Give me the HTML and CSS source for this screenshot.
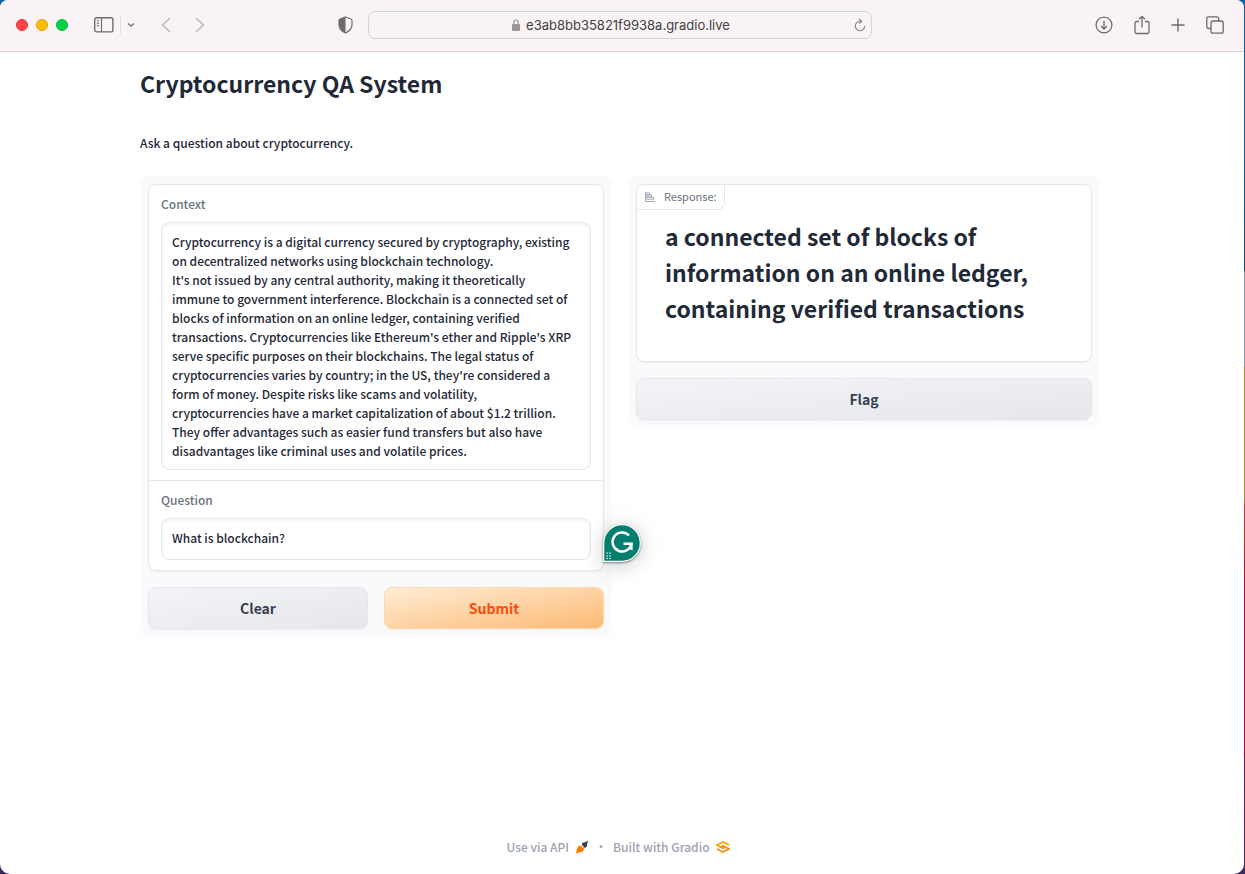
FILE: index.html
```html
<!DOCTYPE html>
<html lang="en">
<head>
<meta charset="utf-8">
<title>Cryptocurrency QA System</title>
<link rel="stylesheet" href="styles.css">
</head>
<body>
<div class="window">
  <header class="toolbar">
    <div class="side left">
      <div class="lights"><span class="light red"></span><span class="light yellow"></span><span class="light green"></span></div>
      <div class="sidebar-tools">
        <button class="tool" aria-label="Sidebar"><svg width="20" height="16" viewBox="0 0 20 16" fill="none" stroke="#6f6a6c" stroke-width="1.4"><rect x=".7" y=".7" width="18.2" height="14.2" rx="2"/><path d="M7.5 1v14M2.8 3.7h2.400M2.8 6.2h2.400M2.8 8.7h2.400" stroke-width="1.1"/></svg></button>
        <span class="rule"></span>
        <button class="tool" aria-label="Tab groups"><svg width="8" height="6" viewBox="0 0 8 6" fill="none" stroke="#7b7678" stroke-width="1.5"><path d="M1 1.500l3 2.500 3-2.500"/></svg></button>
      </div>
      <div class="history">
        <button class="tool" aria-label="Back"><svg width="10" height="16" viewBox="0 0 10 16" fill="none" stroke="#bbb5b7" stroke-width="1.5" stroke-linecap="round" stroke-linejoin="round"><path d="M8.500 1.500L1.500 8l7 6.500"/></svg></button>
        <button class="tool" aria-label="Forward"><svg width="10" height="16" viewBox="0 0 10 16" fill="none" stroke="#bbb5b7" stroke-width="1.5" stroke-linecap="round" stroke-linejoin="round"><path d="M1.500 1.500l7 6.500-7 6.500"/></svg></button>
      </div>
      <button class="tool shield" aria-label="Privacy report"><svg width="15" height="18" viewBox="0 0 15 18"><path d="M7.500 1L13 3q1 .3 1 1.500V9c0 4-2.500 6-6.500 8C3.500 15 1 13 1 9V4.500Q1 3.300 2 3z" fill="none" stroke="#6f6a6c" stroke-width="1.200"/><path d="M7.500 1L2 3Q1 3.300 1 4.500V9c0 4 2.500 6 6.500 8z" fill="#6f6a6c"/></svg></button>
    </div>
    <div class="address">
      <span class="url"><svg width="8" height="12" viewBox="0 0 8 12"><path d="M1.800 6V3.200a2.200 2.200 0 014.400 0V6" fill="none" stroke="#9b9698" stroke-width="1.200"/><rect y="5" width="8" height="7" rx="1" fill="#9b9698"/></svg>e3ab8bb35821f9938a.gradio.live</span>
      <button class="tool" aria-label="Reload"><svg width="12" height="14" viewBox="0 0 12 14" fill="none" stroke="#858082" stroke-width="1.100"><path d="M7 3.300H6A4.700 4.700 0 1010.700 8M5 .8l2.700 2.500L5 5.800"/></svg></button>
    </div>
    <div class="side right">
      <button class="tool" aria-label="Downloads"><svg width="18" height="18" viewBox="0 0 18 18" fill="none" stroke="#6f6a6c" stroke-width="1.300"><circle cx="9" cy="9" r="7.900"/><path d="M9 4.800v8M6 10l3 3 3-3"/></svg></button>
      <button class="tool" aria-label="Share"><svg width="16" height="20" viewBox="0 0 16 20" fill="none" stroke="#6f6a6c" stroke-width="1.300"><path d="M5 6.500H2.500q-1.500 0-1.500 1.500v9q0 1.500 1.500 1.500h11q1.500 0 1.500-1.500V8q0-1.500-1.500-1.500H11M8 12.500V1.500M5 4.300l3-3 3 3"/></svg></button>
      <button class="tool" aria-label="New tab"><svg width="14" height="14" viewBox="0 0 14 14" fill="none" stroke="#6f6a6c" stroke-width="1.400"><path d="M7 .5v13M.5 7h13"/></svg></button>
      <button class="tool" aria-label="Tab overview"><svg width="18" height="18" viewBox="0 0 18 18" fill="none" stroke="#6f6a6c" stroke-width="1.300"><rect x="5" y="5" width="12.200" height="12.200" rx="2"/><path d="M5 12.500H2.800q-2 0-2-2V2.800q0-2 2-2h7.900q2 0 2 2V5"/></svg></button>
    </div>
  </header>

  <main class="page">
    <h1 class="title">Cryptocurrency QA System</h1>
    <p class="intro">Ask a question about cryptocurrency.</p>
    <div class="columns">
      <section class="panel">
        <div class="card form">
          <div class="field">
            <label for="context">Context</label>
            <textarea id="context" class="box" rows="12" spellcheck="false">Cryptocurrency is a digital currency secured by cryptography, existing
on decentralized networks using blockchain technology.
It's not issued by any central authority, making it theoretically
immune to government interference. Blockchain is a connected set of
blocks of information on an online ledger, containing verified
transactions. Cryptocurrencies like Ethereum's ether and Ripple's XRP
serve specific purposes on their blockchains. The legal status of
cryptocurrencies varies by country; in the US, they're considered a
form of money. Despite risks like scams and volatility,
cryptocurrencies have a market capitalization of about $1.2 trillion.
They offer advantages such as easier fund transfers but also have
disadvantages like criminal uses and volatile prices.</textarea>
          </div>
          <div class="field">
            <label for="question">Question</label>
            <input id="question" class="box" type="text" value="What is blockchain?" spellcheck="false">
          </div>
          <svg class="assistant" width="38" height="38" viewBox="0 0 38 38"><path d="M.7 37.300V19A18.300 18.300 0 1119 37.300z" fill="#027e6f" stroke="#fff" stroke-width="1.200"/><path d="M26 11.500A9.500 9.500 0 1028.400 19.700M20.500 19.800h9.300" fill="none" stroke="#fff" stroke-width="2.500"/><path d="M27 21l2.600-.4v5.600l-3-1z" fill="#fff"/><path d="M3.500 28.500h1.300v1.300H3.500zM6.300 28.500h1.300v1.300H6.300zM3.500 31.200h1.300v1.300H3.500zM6.300 31.200h1.300v1.300H6.300zM3.500 33.800h1.300v1.300H3.500zM6.300 33.800h1.300v1.300H6.300z" fill="#fff"/></svg>
        </div>
        <div class="actions">
          <button class="btn">Clear</button>
          <button class="btn primary">Submit</button>
        </div>
      </section>
      <section class="panel">
        <div class="card result">
          <div class="tag"><svg width="10" height="10" viewBox="0 0 10 10" fill="none" stroke="#9ca3af" stroke-width=".9"><path d="M.5 0v9.500H10M.5 1h4v2h-4M.5 3h6v2h-6M.5 5.300h8v2h-8"/></svg>Response:</div>
          <h2 class="answer">a connected set of blocks of information on an online ledger, containing verified transactions</h2>
        </div>
        <div class="actions"><button class="btn">Flag</button></div>
      </section>
    </div>
  </main>

  <footer class="footer">
    <a href="#api">Use via API <svg width="14" height="14" viewBox="0 0 14 14"><path d="M6.800 4.200Q7.300 1.800 9.800 2.200L13.300.8 12 4q.8 3-2.300 3.900L8.800 7z" fill="#334155"/><path d="M4.800 5.600l4 3.600-.8 2.300-2.700.8L1 13.500l.8-4 1-2.700z" fill="#ff7c00"/><path d="M5.500 7.500L7 6M7.500 9L9 7.500" stroke="#ff7c00" stroke-width="1.100"/></svg></a>
    <span class="dot">·</span>
    <a href="#gradio">Built with Gradio <svg width="14" height="12" viewBox="0 0 14 12" fill="none" stroke="#ff9d00" stroke-width="1.600" stroke-linejoin="round"><path d="M13 4L7 1 1 4l6 3.200 2.500-1.300"/><path d="M1 8l6 3 6-3-6-3.200L4.500 6M1 4v1M13 7v1" stroke="#ff8800"/></svg></a>
  </footer>
</div>
</body>
</html>
```
FILE: styles.css
```css
* { box-sizing: border-box; }
body {
  margin: 0;
  min-height: 100vh;
  display: flex;
  padding-right: 1px;
  background: linear-gradient(#0b60a8 0 18%, #0b4a78 31%, #8b95ab 31% 42%, #b58422 42% 57%, #c04a28 58%, #a8084a 68% 86%, #7a1450 87%, #3d2a5c);
  color: #1f2937;
  font: 500 12px/19px "Source Sans Pro", "Noto Sans CJK SC", sans-serif;
}
button, input, textarea { font: inherit; color: inherit; }
.window {
  flex: 1;
  display: flex;
  flex-direction: column;
  background: #fff;
  border-radius: 8px 8px 10px 10px;
  overflow: hidden;
}
.toolbar {
  display: grid;
  grid-template-columns: 1fr 504px 1fr;
  align-items: center;
  height: 52px;
  padding: 0 20px 2px 16px;
  background: #f9f3f5;
  border-bottom: 1px solid #d9d4d6;
}
.side { display: flex; align-items: center; }
.tool { display: flex; padding: 0; border: 0; background: none; }
.lights { display: flex; gap: 8px; }
.light { width: 12px; height: 12px; border-radius: 50%; border: 1px solid; }
.red { background: #ff4545; border-color: #e0383a; }
.yellow { background: #ffbd00; border-color: #dfa010; }
.green { background: #00d445; border-color: #12b53c; }
.sidebar-tools { display: flex; align-items: center; gap: 6px; margin-left: 26px; }
.rule { width: 1px; height: 18px; background: #e5dfe1; }
.history { display: flex; gap: 24px; margin-left: 26px; }
.shield { margin: 0 15px 0 auto; }
.right { justify-content: flex-end; gap: 21px; }
.address {
  display: flex;
  align-items: center;
  height: 28px;
  padding: 0 5px 0 19px;
  border: 1px solid #d9d4d6;
  border-radius: 7px;
  color: #444042;
  font: 13px/20px Inter, sans-serif;
}
.url { flex: 1; display: flex; align-items: center; justify-content: center; gap: 6px; }
.page { width: 100%; max-width: 996px; margin: 0 auto; padding: 0 20px 0 16px; }
.title { margin: 14px 0 0; font-size: 23px; line-height: 34px; font-weight: 600; }
.intro { margin: 33px 0 24px; }
.columns { display: grid; grid-template-columns: 1fr 1fr; align-items: start; gap: 16px; }
.panel { padding: 8px; border-radius: 8px; background: #f9fafb; }
.card {
  position: relative;
  border: 1px solid #e5e7eb;
  border-radius: 8px;
  background: #fff;
  box-shadow: 0 1px 2px rgba(0, 0, 0, .05);
}
.field { padding: 9px 12px 10px; }
.field + .field { border-top: 1px solid #e5e7eb; }
.field label { display: block; margin-bottom: 9px; color: #6b7280; }
.box {
  display: block;
  width: 100%;
  padding: 9px 10px;
  border: 1px solid #e5e7eb;
  border-radius: 8px;
  background: #fff;
  box-shadow: inset 0 2px 4px rgba(0, 0, 0, .05);
  resize: none;
  overflow: hidden;
}
textarea.box { height: 248px; }
input.box { height: 42px; padding-bottom: 12px; }
.assistant {
  position: absolute;
  right: -38px;
  bottom: 8px;
  z-index: 1;
  overflow: visible;
  filter: drop-shadow(0 1px 1px rgba(0, 0, 0, .45)) drop-shadow(0 3px 10px rgba(0, 0, 0, .2));
}
.actions { display: flex; gap: 16px; margin-top: 16px; }
.btn {
  flex: 1;
  height: 42px;
  padding: 0;
  border: 1px solid #e5e7eb;
  border-radius: 8px;
  background: linear-gradient(to bottom right, #f3f4f6, #e5e7eb);
  box-shadow: 0 1px 2px rgba(0, 0, 0, .05);
  color: #374151;
  font-size: 14px;
  line-height: 20px;
  font-weight: 600;
}
.primary {
  border-color: #fed7aa;
  background: linear-gradient(to bottom right, #ffedd5, #fdba74);
  color: #ff4b0a;
}
.result { padding: 33px 28px 35px; }
.tag {
  position: absolute;
  top: 0;
  left: 0;
  display: flex;
  align-items: center;
  gap: 9px;
  height: 25px;
  padding: 0 7px 1px 8px;
  border: solid #e5e7eb;
  border-width: 0 1px 1px 0;
  border-radius: 8px 0 8px 0;
  color: #6b7280;
  font-size: 11px;
  font-weight: 400;
}
.answer { margin: 0; font-size: 23px; line-height: 36px; font-weight: 600; }
.footer {
  display: flex;
  justify-content: center;
  gap: 6px;
  margin-top: auto;
  padding: 0 8px 18px 0;
  color: #9ca3af;
}
.footer a { display: flex; align-items: center; gap: 6px; color: inherit; text-decoration: none; }
```
